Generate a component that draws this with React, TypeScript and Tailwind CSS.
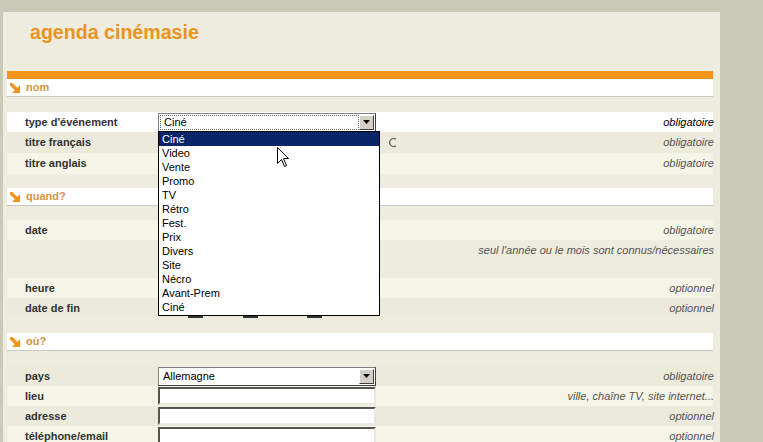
import React from "react";

const Arrow = () => (
  <svg width="10" height="10" viewBox="0 0 10 10" className="shrink-0">
    <path d="M1.5 1.5 L6.5 6.5" stroke="#f0941c" strokeWidth="3.4" strokeLinecap="square" />
    <path d="M10 2 L10 10 L2 10 Z" fill="#f0941c" />
  </svg>
);

function SectionHeader({ label }: { label: string }) {
  return (
    <div className="h-[18px] bg-white border-b border-[#c9c9c4] flex items-center gap-[6px] pl-[3px]">
      <Arrow />
      <span className="text-[11px] font-bold text-[#d4943a]">{label}</span>
    </div>
  );
}

function Row({
  label,
  note,
  tone,
  h = "h-[20px]",
  dark,
  children,
}: {
  label?: string;
  note?: string;
  tone: string;
  h?: string;
  dark?: boolean;
  children?: React.ReactNode;
}) {
  return (
    <div className={`${h} ${tone} flex items-center`}>
      <div className="w-[151px] shrink-0 pl-[18px] text-[11px] font-bold text-[#333]">{label}</div>
      <div className="w-[222px] shrink-0 flex items-center">{children}</div>
      <div
        className={`flex-1 text-right -mr-[1px] text-[11px] italic ${
          dark ? "text-black" : "text-[#555]"
        }`}
      >
        {note}
      </div>
    </div>
  );
}

function SelectBox({ value, focused }: { value: string; focused?: boolean }) {
  return (
    <div className="w-[218px] h-[19px] bg-white border border-t-[#808080] border-l-[#808080] border-r-[#404040] border-b-[#404040] flex items-center p-[1px]">
      <div
        className={`flex-1 h-full flex items-center pl-[3px] text-[11px] text-black ${
          focused ? "border border-dotted border-[#666]" : ""
        }`}
      >
        {value}
      </div>
      <div className="w-[15px] h-full bg-[#d4d0c8] border border-t-white border-l-white border-r-[#404040] border-b-[#404040] flex items-center justify-center">
        <svg width="7" height="4" viewBox="0 0 7 4">
          <path d="M0 0 L7 0 L3.5 4 Z" fill="#000" />
        </svg>
      </div>
    </div>
  );
}

function TextBox() {
  return (
    <div className="w-[218px] h-[18px] bg-white border-2 border-t-[#555] border-l-[#555] border-r-[#e8e8e0] border-b-[#e8e8e0]" />
  );
}

const options = [
  "Ciné",
  "Video",
  "Vente",
  "Promo",
  "TV",
  "Rétro",
  "Fest.",
  "Prix",
  "Divers",
  "Site",
  "Nécro",
  "Avant-Prem",
  "Ciné",
];

const LIGHT = "bg-[#f4f4e7]";
const DARK = "bg-[#ebeadb]";

export default function App() {
  return (
    <div className="w-[763px] h-[442px] overflow-hidden bg-[#cbcab9] pt-[12px] font-['Liberation_Sans',Arial,sans-serif]">
      <div className="relative ml-[3px] w-[717px] h-[440px] bg-[#edecde]">
        <div className="h-[59px] pl-[27px] pt-[6px]">
          <h1 className="text-[19.6px] font-bold text-[#ea931f]">agenda cinémasie</h1>
        </div>

        <div className="ml-[4px] mr-[7px]">
          <div className="h-[8px] bg-[#f39518]" />
          <SectionHeader label="nom" />
          <div className="h-[15px]" />
          <Row label="type d'événement" note="obligatoire" tone="bg-white" dark>
            <SelectBox value="Ciné" focused />
          </Row>
          <Row label="titre français" note="obligatoire" tone={DARK} h="h-[21px]">
            <div className="ml-[230px] shrink-0">
              <svg width="10" height="11" viewBox="0 0 10 11">
                <path d="M8 2.2 A4 4 0 1 0 8 8.8" stroke="#666" strokeWidth="1.3" fill="none" />
              </svg>
            </div>
          </Row>
          <Row label="titre anglais" note="obligatoire" tone={LIGHT} h="h-[21px]" />
          <div className="h-[14px]" />
          <SectionHeader label="quand?" />
          <div className="h-[14px]" />
          <Row label="date" note="obligatoire" tone={LIGHT} />
          <div className="h-[38px] flex items-start pt-[2px]">
            <div className="flex-1 text-right -mr-[1px] text-[11px] italic text-[#555]">
              seul l'année ou le mois sont connus/nécessaires
            </div>
          </div>
          <Row label="heure" note="optionnel" tone={LIGHT} />
          <Row label="date de fin" note="optionnel" tone={DARK}>
            <div className="flex items-end h-[20px] text-[#888] text-[11px]">
              <div className="w-[30px]" />
              <div className="w-[15px] h-[3px] bg-[#333]" />
              <div className="w-[40px]" />
              <div className="w-[15px] h-[3px] bg-[#333]" />
              <div className="w-[49px]" />
              <div className="w-[15px] h-[3px] bg-[#333]" />
            </div>
          </Row>
          <div className="h-[15px]" />
          <SectionHeader label="où?" />
          <div className="h-[15px]" />
          <Row label="pays" note="obligatoire" tone={DARK}>
            <SelectBox value="Allemagne" />
          </Row>
          <Row label="lieu" note="ville, chaîne TV, site internet..." tone={LIGHT}>
            <TextBox />
          </Row>
          <Row label="adresse" note="optionnel" tone={DARK}>
            <TextBox />
          </Row>
          <Row label="téléphone/email" note="optionnel" tone={LIGHT}>
            <TextBox />
          </Row>
        </div>

        {/* open dropdown list */}
        <div className="absolute left-[155px] top-[119px] w-[222px] bg-white border border-black pb-[1px]">
          {options.map((o, i) => (
            <div
              key={i}
              className={`h-[14px] leading-[15px] pl-[3px] text-[11px] ${
                i === 0 ? "bg-[#0a246a] text-white" : "text-black"
              }`}
            >
              {o}
            </div>
          ))}
        </div>

        {/* mouse pointer */}
        <svg
          className="absolute left-[274px] top-[135px]"
          width="13"
          height="21"
          viewBox="0 0 13 21"
        >
          <path
            d="M0.5 0.5 L0.5 16.5 L4.5 12.5 L7.5 19.5 L9.5 18.5 L6.5 11.5 L11.5 11.5 Z"
            fill="white"
            stroke="black"
            strokeWidth="1"
          />
        </svg>
      </div>
    </div>
  );
}
